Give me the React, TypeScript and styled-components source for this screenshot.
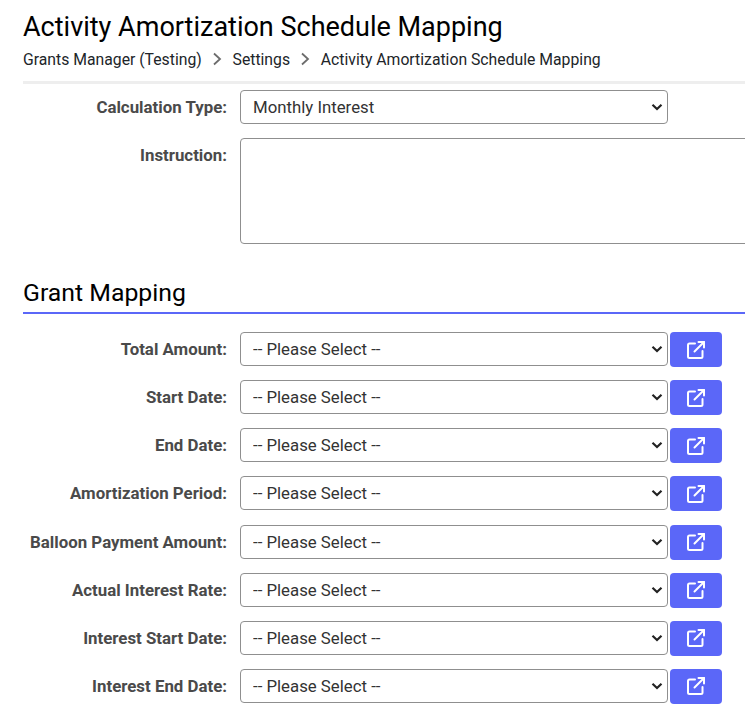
import styled, { createGlobalStyle } from "styled-components"

const GlobalStyle = createGlobalStyle`
    html, body {
        margin: 0;
        padding: 0;
        height: 710px;
        overflow: hidden;
        background: #fff;
        font-family: Roboto, "Liberation Sans", sans-serif;
    }
`

const Page = styled.div`
    width: 745px;
    overflow: hidden;
    padding: 10px 0 0 23px;
    box-sizing: border-box;
    color: #111;
`

const Title = styled.h1`
    margin: 0;
    font-size: 27px;
    line-height: 34px;
    font-weight: 400;
    color: #000;
`

const Crumbs = styled.nav`
    display: flex;
    align-items: center;
    height: 24px;
    margin-top: 3px;
    font-size: 15.75px;
    color: #212529;
`

const CrumbArrow = styled.svg`
    width: 10px;
    height: 14px;
    margin: 0 10.4px;
    fill: none;
    stroke: #6c6c6c;
    stroke-width: 1.8;
`

const Divider = styled.div`
    height: 3px;
    margin-top: 10px;
    background: #eee;
`

const Form = styled.div`
    display: flex;
    flex-direction: column;
    padding-top: 6px;
`

const Row = styled.div<{ $gap?: number }>`
    display: flex;
    align-items: flex-start;
    gap: 13px;
    margin-bottom: ${(p) => p.$gap ?? 13.14}px;
`

const Label = styled.label`
    flex: 0 0 204px;
    text-align: right;
    font-size: 16.85px;
    font-weight: 700;
    line-height: 34px;
    color: #4a4a4a;
    white-space: nowrap;
`

const chevron = `url("data:image/svg+xml,%3Csvg xmlns='http://www.w3.org/2000/svg' viewBox='0 0 12 8'%3E%3Cpath d='M1.5 1.8 6 6 10.5 1.8' fill='none' stroke='%23222' stroke-width='2.2'/%3E%3C/svg%3E")`

const Select = styled.select`
    flex: 0 0 428px;
    height: 34px;
    padding: 0 24px 0 12px;
    appearance: none;
    background: #fff ${chevron} no-repeat right 4px center / 12px 8px;
    border: 1px solid #8f8f8f;
    border-radius: 4px;
    font-family: inherit;
    font-size: 16.8px;
    color: #333;
`

const Instruction = styled.textarea`
    flex: 0 0 540px;
    height: 106px;
    box-sizing: border-box;
    border: 1px solid #8f8f8f;
    border-radius: 4px;
    resize: none;
    display: block;
`

const Heading = styled.h2`
    margin: 30px 0 18px;
    height: 38px;
    width: 722px;
    border-bottom: 2px solid #5b67f8;
    font-size: 24.8px;
    line-height: 38px;
    font-weight: 400;
    color: #000;
`

const MapButton = styled.button`
    display: flex;
    flex: 0 0 52px;
    align-items: center;
    justify-content: center;
    height: 35px;
    margin-left: -11px;
    padding: 0;
    border: none;
    border-radius: 4px;
    background: #5b67f8;
`

const fields = [
    "Total Amount:",
    "Start Date:",
    "End Date:",
    "Amortization Period:",
    "Balloon Payment Amount:",
    "Actual Interest Rate:",
    "Interest Start Date:",
    "Interest End Date:",
]

export default function App() {
    return (
        <Page>
            <GlobalStyle />
            <Title>Activity Amortization Schedule Mapping</Title>
            <Crumbs>
                <span>Grants Manager (Testing)</span>
                <CrumbArrow viewBox="0 0 10 14"><path d="M2 1.5 L8 7 L2 12.5" /></CrumbArrow>
                <span>Settings</span>
                <CrumbArrow viewBox="0 0 10 14"><path d="M2 1.5 L8 7 L2 12.5" /></CrumbArrow>
                <span>Activity Amortization Schedule Mapping</span>
            </Crumbs>
            <Divider />
            <Form>
                <Row $gap={14}>
                    <Label>Calculation Type:</Label>
                    <Select defaultValue="Monthly Interest">
                        <option>Monthly Interest</option>
                    </Select>
                </Row>
                <Row $gap={0}>
                    <Label>Instruction:</Label>
                    <Instruction />
                </Row>
                <Heading>Grant Mapping</Heading>
                {fields.map((f) => (
                    <Row key={f}>
                        <Label>{f}</Label>
                        <Select defaultValue="">
                            <option value="">-- Please Select --</option>
                        </Select>
                        <MapButton>
                            <svg width="20" height="20" viewBox="0 0 20 20" fill="none" stroke="#fff" strokeWidth="2" strokeLinecap="round" strokeLinejoin="round">
                                <path d="M9 3.5 H3.5 a1.5 1.5 0 0 0 -1.5 1.5 V16.5 a1.5 1.5 0 0 0 1.5 1.5 H15 a1.5 1.5 0 0 0 1.5 -1.5 V11" />
                                <path d="M8.5 11.5 L18 2" />
                                <path d="M12.5 2 H18 V7.5" />
                            </svg>
                        </MapButton>
                    </Row>
                ))}
            </Form>
        </Page>
    )
}
